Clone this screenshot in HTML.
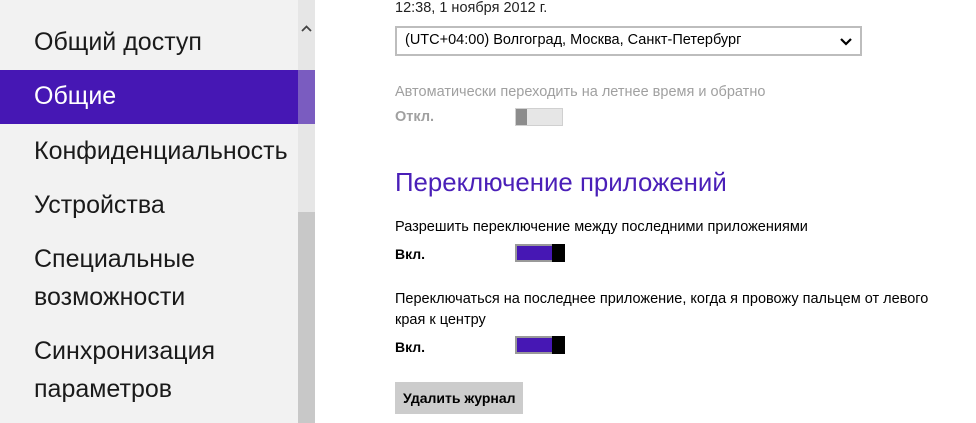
<!DOCTYPE html><html><head><meta charset="utf-8"><style>
body{margin:0;width:976px;height:423px;overflow:hidden;background:#fff;font-family:"Segoe UI","Liberation Sans",sans-serif;position:relative}
.side{position:absolute;left:0;top:0;width:298px;height:423px;background:#f2f2f2}
.sb{position:absolute;left:298px;top:0;width:17px;height:423px;background:#e6e6e6}
.thumb{position:absolute;left:298px;top:212px;width:17px;height:211px;background:#c8c8c8}
.it{position:absolute;left:34px;font-size:25px;color:#1a1a1a;line-height:38px}
.sel{position:absolute;left:0;top:70px;width:298px;height:54px;background:#4617b4}
.selsb{position:absolute;left:298px;top:70px;width:17px;height:54px;background:#7a5cc0}
.t{position:absolute;left:395px;font-size:14.5px;color:#000;white-space:nowrap}
.tg{position:absolute;width:48px;height:18px;box-sizing:border-box}
</style></head><body>
<div class="side"></div><div class="sb"></div><div class="thumb"></div>
<div class="sel"></div><div class="selsb"></div>
<svg style="position:absolute;left:301px;top:25px" width="11" height="8"><path d="M1 6 L5.5 1.5 L10 6" stroke="#444" stroke-width="1.8" fill="none"/></svg>
<div class="it" style="top:23px">Общий доступ</div>
<div class="it" style="top:77px;color:#fff">Общие</div>
<div class="it" style="top:132px">Конфиденциальность</div>
<div class="it" style="top:186px">Устройства</div>
<div class="it" style="top:240px">Специальные<br>возможности</div>
<div class="it" style="top:332px">Синхронизация<br>параметров</div>
<div class="t" style="top:0px;color:#222">12:38, 1 ноября 2012 г.</div>
<div style="position:absolute;left:395px;top:26px;width:467px;height:30px;box-sizing:border-box;border:2px solid #bdbdbd"></div>
<div class="t" style="left:405px;top:32px">(UTC+04:00) Волгоград, Москва, Санкт-Петербург</div>
<svg style="position:absolute;left:840px;top:37px" width="12" height="9"><path d="M1 2 L6 7 L11 2" stroke="#000" stroke-width="2.2" fill="none"/></svg>
<div class="t" style="top:84px;color:#a0a0a0">Автоматически переходить на летнее время и обратно</div>
<div class="t" style="top:109px;color:#a0a0a0;font-weight:bold">Откл.</div>
<div class="tg" style="left:515px;top:108px;border:1px solid #d0d0d0;background:#e6e6e6"><div style="width:11px;height:16px;background:#8c8c8c"></div></div>
<div class="t" style="top:169px;font-size:25.8px;color:#4a1fb8">Переключение приложений</div>
<div class="t" style="top:219px">Разрешить переключение между последними приложениями</div>
<div class="t" style="top:246px;font-weight:bold;font-size:14px">Вкл.</div>
<div class="tg" style="left:515px;top:244px;border:2px solid #999;border-right:none;background:#4617b4"></div>
<div style="position:absolute;left:552px;top:244px;width:13px;height:18px;background:#000"></div>
<div class="t" style="top:291px">Переключаться на последнее приложение, когда я провожу пальцем от левого</div>
<div class="t" style="top:312px">края к центру</div>
<div class="t" style="top:339px;font-weight:bold;font-size:14px">Вкл.</div>
<div class="tg" style="left:515px;top:336px;border:2px solid #999;border-right:none;background:#4617b4"></div>
<div style="position:absolute;left:552px;top:336px;width:13px;height:18px;background:#000"></div>
<div style="position:absolute;left:395px;top:382px;width:128px;height:32px;background:#cccccc"></div>
<div class="t" style="left:403px;top:390px;font-weight:bold;font-size:14px">Удалить журнал</div>
</body></html>
